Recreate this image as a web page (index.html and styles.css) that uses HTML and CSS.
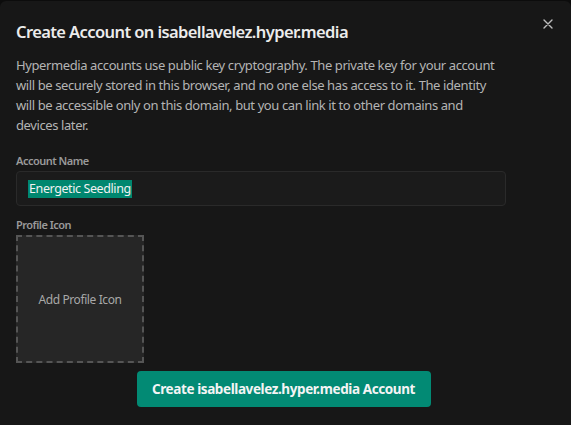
FILE: index.html
```html
<!DOCTYPE html>
<html lang="en">
<head>
    <meta charset="UTF-8">
    <meta name="viewport" content="width=device-width, initial-scale=1.0">
    <title>Create Account</title>
    <link rel="stylesheet" href="styles.css">
</head>
<body>
    <div class="modal">
        <button class="close" aria-label="Close">
            <svg width="10" height="10" viewBox="0 0 10 10">
                <path d="M1 1 L9 9 M9 1 L1 9" stroke="#bdbdbd" stroke-width="1.4" stroke-linecap="round"/>
            </svg>
        </button>
        <h1>Create Account on isabellavelez.hyper.media</h1>
        <p class="intro">Hypermedia accounts use public key cryptography. The private key for your account will be securely stored in this browser, and no one else has access to it. The identity will be accessible only on this domain, but you can link it to other domains and devices later.</p>

        <label class="label">Account Name</label>
        <div class="input"><span class="selected">Energetic Seedling</span></div>

        <label class="label">Profile Icon</label>
        <div class="icon-drop">Add Profile Icon</div>

        <div class="actions">
            <button class="primary">Create isabellavelez.hyper.media Account</button>
        </div>
    </div>
</body>
</html>
```

FILE: styles.css
```css
* {
    box-sizing: border-box;
    margin: 0;
    padding: 0;
}

html, body {
    height: 100%;
}

body {
    background-color: #0c0c0c;
    font-family: "Noto Sans", "Open Sans", sans-serif;
    color: #e6e6e6;
    padding-top: 1px;
    overflow: hidden;
}

.modal {
    position: relative;
    background-color: #171717;
    border-radius: 6px 6px 0 0;
    height: 100%;
    padding: 19px 16px 0 16px;
}

.close {
    position: absolute;
    top: 18px;
    right: 18px;
    background: none;
    border: none;
    width: 10px;
    height: 10px;
    display: flex;
}

h1 {
    font-size: 16.5px;
    font-weight: 600;
    color: #ececec;
    line-height: 24px;
    letter-spacing: -0.6px;
    margin-bottom: 11px;
}

.intro {
    width: 488px;
    font-size: 13px;
    line-height: 20px;
    color: #b4b4b4;
    letter-spacing: -0.4px;
    margin-bottom: 18px;
}

.label {
    display: block;
    font-size: 11px;
    font-weight: 600;
    color: #9a9a9a;
    line-height: 16px;
    letter-spacing: -0.5px;
    margin-bottom: 2px;
}

.input {
    height: 35px;
    width: 490px;
    border: 1px solid #2a2a2a;
    border-radius: 4px;
    background-color: #1b1b1b;
    display: flex;
    align-items: center;
    padding-left: 11px;
    margin-bottom: 11px;
}

.selected {
    background-color: #00876f;
    color: #f2f2f2;
    font-size: 12.5px;
    line-height: 18px;
    letter-spacing: -0.4px;
    padding: 0 1px;
}

.icon-drop {
    width: 128px;
    height: 128px;
    border: 2px dashed #555;
    background-color: #262626;
    display: flex;
    align-items: center;
    justify-content: center;
    font-size: 12px;
    color: #a8a8a8;
    letter-spacing: -0.4px;
}

.actions {
    display: flex;
    justify-content: center;
    padding-top: 8px;
    padding-right: 4px;
}

.primary {
    height: 36px;
    width: 294px;
    background-color: #028a74;
    border: none;
    border-radius: 4px;
    font-family: "Noto Sans", "Open Sans", sans-serif;
    font-size: 13.5px;
    font-weight: 700;
    color: #f4f4f4;
    letter-spacing: -0.4px;
}
```
